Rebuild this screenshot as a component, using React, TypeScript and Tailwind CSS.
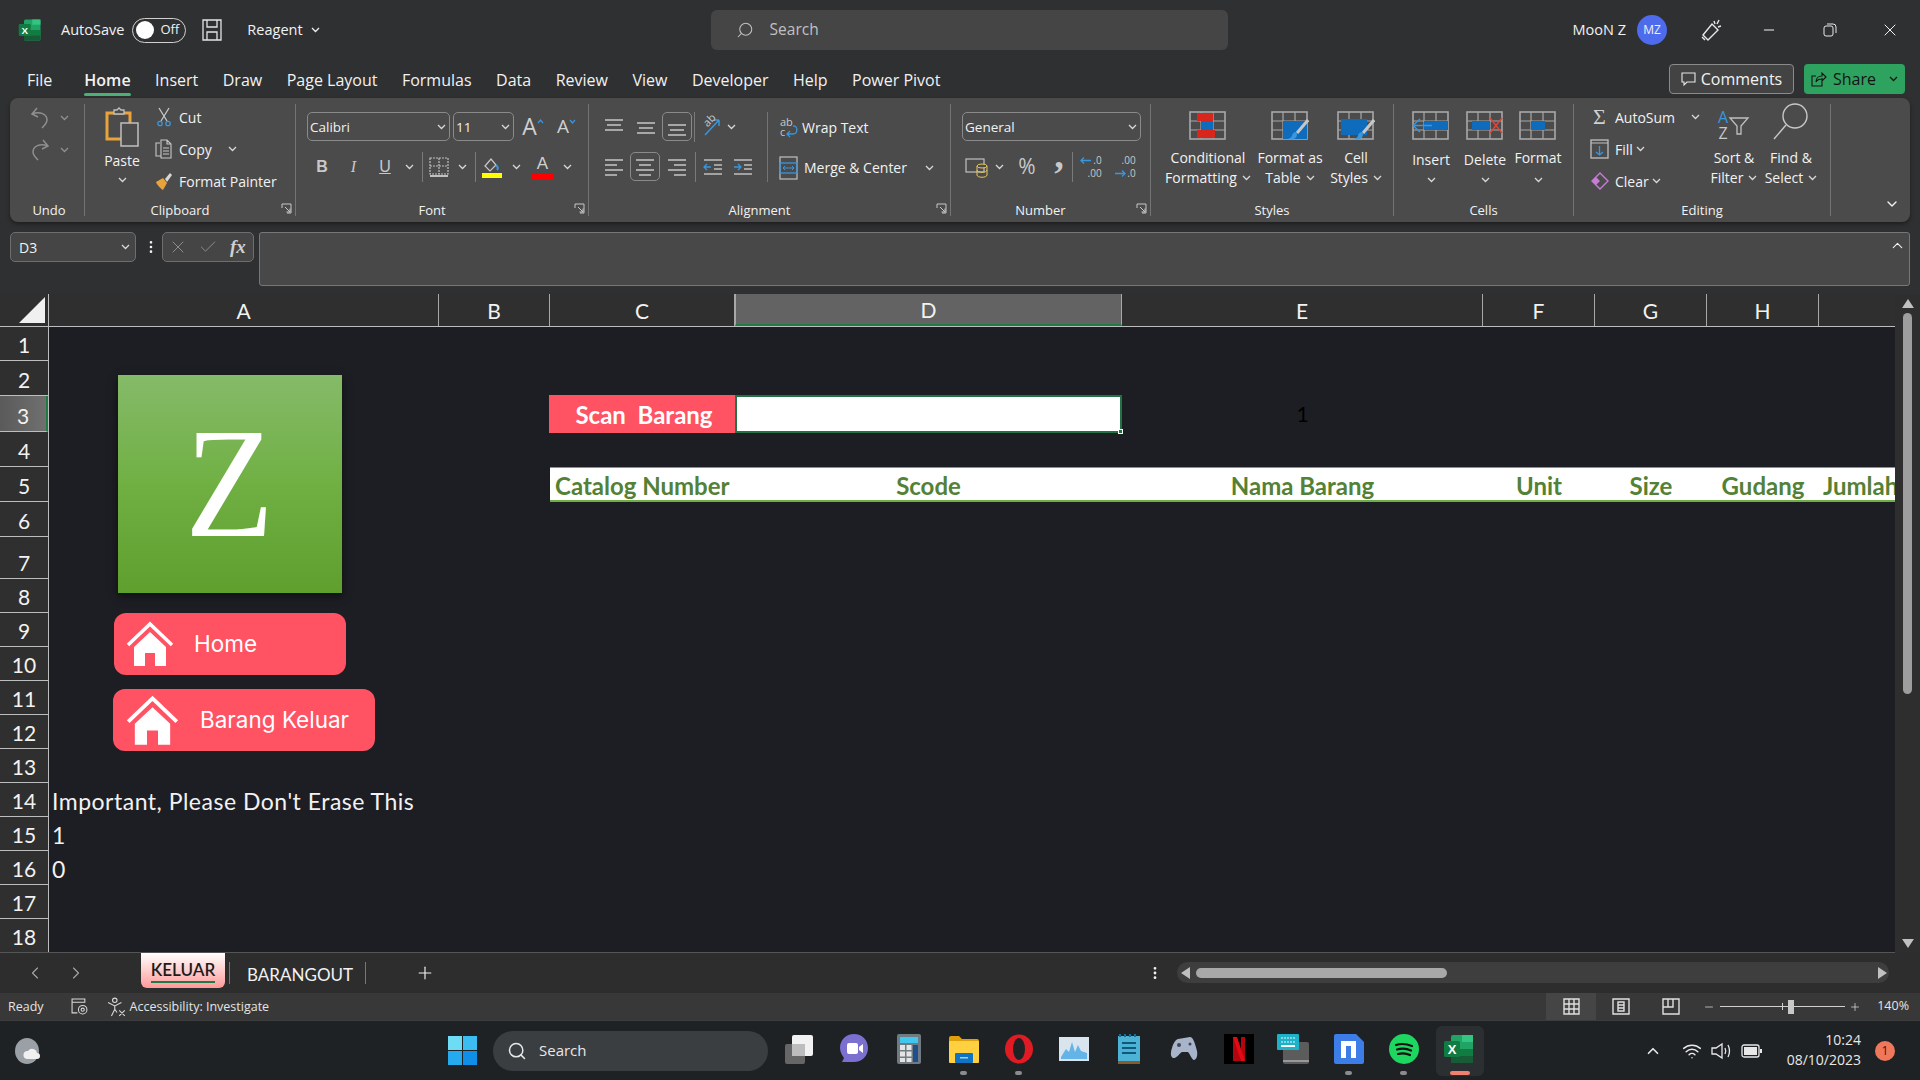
import type { ReactNode } from "react";
import { ChevronDown, ChevronLeft, ChevronRight, ChevronUp, Minus, Plus, Search, X, Check, Wifi, MoreVertical } from "lucide-react";

const G = "#c6c6c6";
const BL = "#3a96dd";

const Chev = ({ c = "#d8d8d8" }: { c?: string }) => (
  <svg width="9" height="6" viewBox="0 0 9 6" className="shrink-0"><path d="M1 1l3.500 3.500L8 1" fill="none" stroke={c} strokeWidth="1.300" /></svg>
);

const Svg = ({ w, h, children }: { w: number; h: number; children: ReactNode }) => (
  <svg width={w} height={h} viewBox={`0 0 ${w} ${h}`} className="shrink-0">{children}</svg>
);

// alignment icons: [y, x1, x2]
const Lines = ({ ys }: { ys: [number, number, number][] }) => (
  <Svg w={20} h={20}>
    {ys.map(([y, a, b]) => <path key={y} d={`M${a} ${y}H${b}`} stroke={G} strokeWidth="1.500" />)}
  </Svg>
);

// table-ish office icon used by the Styles and Cells groups
const TableIcon = ({ children }: { children?: ReactNode }) => (
  <Svg w={38} h={30}>
    <rect x="1" y="2" width="35" height="27" fill="none" stroke="#a8a8a8" strokeWidth="1.600" />
    <path d="M1 11h35M1 20h35M12 2v27M24 2v27" stroke="#a8a8a8" strokeWidth="1.200" />
    {children}
  </Svg>
);

const Brush = () => (
  <g>
    <path d="M37 10L26 23" stroke="#c6c6c6" strokeWidth="3" />
    <path d="M25 22c-3 0-4 3-4 4-1 2-3 2-4 3 4 1 9 0 9-5z" fill="#3a96dd" />
  </g>
);

const Big = ({ w, icon, lines, chev = true, mt = "mt-[8px]" }: { w: string; icon: ReactNode; lines: string[]; chev?: boolean; mt?: string }) => (
  <div className={`flex shrink-0 flex-col items-center ${w}`}>
    <div className="mt-[6px] flex h-[30px] items-center justify-center">{icon}</div>
    <div className={`${mt} flex flex-col items-center text-[14px] leading-[20px]`}>
      {lines.map((l, i) => (
        <span key={l} className="flex items-center gap-[5px] whitespace-nowrap">
          {l}
          {chev && i === lines.length - 1 && <Chev />}
        </span>
      ))}
    </div>
  </div>
);

const Group = ({ w, label, launcher, lab = "", children }: { w: string; label?: string; launcher?: boolean; lab?: string; children?: ReactNode }) => (
  <div className={`relative flex h-full shrink-0 flex-col border-r border-[#747474] ${w}`}>
    <div className="flex-1">{children}</div>
    <div className={`h-[16px] pt-[3px] text-center text-[13px] leading-[14px] ${launcher ? "pr-[20px]" : ""} ${lab}`}>{label}</div>
    {launcher && (
      <svg width="11" height="11" viewBox="0 0 11 11" className="absolute bottom-[2px] right-[3px]">
        <path d="M1 5V1h9v9H6M4 4l5 5M9 5.500V9H5.500" fill="none" stroke="#c8c8c8" strokeWidth="1" />
      </svg>
    )}
  </div>
);

const Row = ({ icon, text, chev, gap = "gap-[3px]" }: { icon: ReactNode; text: string; chev?: ReactNode; gap?: string }) => (
  <div className={`flex h-[28px] items-center ${gap} text-[14px]`}>
    {icon}
    <span className="whitespace-nowrap">{text}</span>
    {chev}
  </div>
);

const Slot = ({ w, children }: { w: string; children: ReactNode }) => (
  <span className={`flex shrink-0 items-center justify-center ${w}`}>{children}</span>
);

const Sep = ({ cls = "mx-[2px]" }: { cls?: string }) => <span className={`h-[30px] w-px shrink-0 bg-[#7a7a7a] ${cls}`} />;

const Dropdown = ({ w, text }: { w: string; text: string }) => (
  <div className={`flex h-[29px] shrink-0 items-center justify-between rounded-[5px] border border-[#8a8a8a] pl-[2px] pr-[3px] text-[13.500px] ${w}`}>
    <span className="pt-[1px]">{text}</span>
    <Chev />
  </div>
);

const Decimal = ({ top, bottom, arrow, arrowTop }: { top: string; bottom: string; arrow: string; arrowTop: boolean }) => (
  <span className="flex flex-col items-end gap-[1px] text-[10px] leading-[12px]">
    <span className="flex items-center gap-[1px]">
      {arrowTop && <svg width="12" height="9" viewBox="0 0 12 9" fill="none"><path d={arrow} stroke={BL} strokeWidth="1.300" /></svg>}
      {top}
    </span>
    <span className="flex items-center gap-[1px]">
      {!arrowTop && <svg width="12" height="9" viewBox="0 0 12 9" fill="none"><path d={arrow} stroke={BL} strokeWidth="1.300" /></svg>}
      {bottom}
    </span>
  </span>
);

const HouseIcon = ({ w }: { w: number }) => (
  <svg width={w} height={w} viewBox="0 0 48 46" className="shrink-0">
    <path d="M2 24L24 3l22 21" fill="none" stroke="#fff" strokeWidth="3.500" />
    <path d="M8 26L24 11l16 15v19H29V32h-10v13H8z" fill="#fff" />
  </svg>
);

const colHeaders: [string, string, boolean][] = [
  ["A", "w-[390px]", false],
  ["B", "w-[111px]", false],
  ["C", "w-[185px]", false],
  ["D", "w-[387px]", true],
  ["E", "w-[361px]", false],
  ["F", "w-[112px]", false],
  ["G", "w-[112px]", false],
  ["H", "w-[112px]", false],
];

const rowHeights = ["h-[34px]", "h-[35px]", "h-[36px]", "h-[35px]", "h-[35px]", "h-[35px]", "h-[42px]", "h-[34px]", "h-[34px]", "h-[34px]", "h-[34px]", "h-[34px]", "h-[34px]", "h-[34px]", "h-[34px]", "h-[34px]", "h-[34px]", "h-[34px]"];

const menu = ["Home", "Insert", "Draw", "Page Layout", "Formulas", "Data", "Review", "View", "Developer", "Help", "Power Pivot"];

const Tile = ({ children, dot, active }: { children: ReactNode; dot?: boolean; active?: boolean }) => (
  <div className="relative flex h-[50px] w-[55px] shrink-0 items-center justify-center">
    {active && <div className="absolute inset-y-0 left-[5px] w-[48px] rounded-md bg-[#2c2f31]" />}
    <div className="relative -mt-[3px] flex">{children}</div>
    {dot && <div className="absolute bottom-[1px] left-[24px] h-[4px] w-[7px] rounded-full bg-[#8c8c8c]" />}
    {active && <div className="absolute bottom-[1px] left-[19px] h-[4px] w-[20px] rounded-full bg-[#f08070]" />}
  </div>
);

const ExcelLogo = ({ s }: { s: number }) => (
  <svg width={s} height={s} viewBox="0 0 32 32" className="shrink-0">
    <rect x="8" y="2" width="22" height="28" rx="2" fill="#21a366" />
    <rect x="19" y="2" width="11" height="7" fill="#33c481" />
    <rect x="8" y="16" width="22" height="7" fill="#107c41" />
    <rect x="8" y="23" width="22" height="7" fill="#185c37" />
    <rect x="1" y="8" width="16" height="16" rx="1.500" fill="#107c41" />
    <text x="9" y="21" textAnchor="middle" fontSize="13" fontWeight="700" fill="#fff" fontFamily="Liberation Sans">X</text>
  </svg>
);

export default function App() {
  return (
    <div className="flex h-[1080px] w-[1920px] flex-col overflow-hidden bg-[#2f3031] font-['Open_Sans',sans-serif] text-[#f2f2f2]">
      {/* title bar */}
      <div className="flex h-[60px] shrink-0 items-center pl-[18px] text-[14.500px]">
        <ExcelLogo s={24} />
        <span className="ml-[19px]">AutoSave</span>
        <div className="ml-[8px] flex h-[25px] w-[54px] items-center justify-between rounded-full border border-[#d0d0d0] pl-[3px] pr-[6px] text-[13px]">
          <span className="h-[18px] w-[18px] rounded-full bg-white" />
          Off
        </div>
        <span className="ml-[16px] flex">
          <svg width="20" height="22" viewBox="0 0 20 22"><path d="M1 1h18v20H1zM5 1v7h10V1M5 21v-8h10v8" fill="none" stroke="#e4e4e4" strokeWidth="1.300" /></svg>
        </span>
        <span className="ml-[25px]">Reagent</span>
        <span className="ml-[8px]"><Chev c="#f0f0f0" /></span>
        <div className="ml-[391px] flex h-[40px] w-[517px] items-center gap-[16px] rounded-md bg-[#454545] pl-[25px] text-[#c0c0c0]">
          <Search size={18} className="-scale-x-100" strokeWidth={1.400} />
          <span className="-mt-[1px] text-[15.500px]">Search</span>
        </div>
        <span className="ml-auto">MooN Z</span>
        <span className="ml-[11px] flex h-[30px] w-[30px] items-center justify-center rounded-full bg-[#4f6bed] text-[12px]">MZ</span>
        <svg width="24" height="24" viewBox="0 0 24 24" className="ml-[32px]" fill="none" stroke="#e8e8e8" strokeWidth="1.400"><path d="M9 22l-5-5L13 6l6 6zM3 19l3 3M15 3l1 3M20 2l-2 4M22 8l-3 1" /></svg>
        <Minus size={16} className="ml-[38px]" strokeWidth={1.500} />
        <svg width="14" height="14" viewBox="0 0 14 14" fill="none" stroke="#e8e8e8" className="ml-[46px]"><rect x="1" y="3" width="9" height="10" rx="2" /><path d="M4 1h6a3 3 0 0 1 3 3v6" /></svg>
        <X size={20} className="ml-[43px] mr-[20px]" strokeWidth={1.200} />
      </div>

      {/* menu row */}
      <div className="flex h-[38px] shrink-0 items-start pl-[27px] pr-[15px] text-[16px]">
        <div className="h-[38px] pt-[8px] leading-[24px]">File</div>
        <div className="ml-[32px] flex gap-[24.500px]">
          {menu.map((m) => (
            <div key={m} className={`relative h-[38px] whitespace-nowrap pt-[8px] leading-[24px] ${m === "Home" ? "font-semibold" : ""}`}>
              {m}
              {m === "Home" && <div className="absolute inset-x-0 bottom-[2px] h-[3px] rounded-sm bg-[#4caf78]" />}
            </div>
          ))}
        </div>
        <div className="ml-auto mt-[4px] flex h-[30px] w-[125px] items-center justify-center gap-[5px] rounded-[4px] border border-[#8a8a8a] bg-[#434343]">
          <svg width="15" height="15" viewBox="0 0 15 15" fill="none" stroke="#e8e8e8" strokeWidth="1.100"><path d="M1 1h13v9H6l-3 3v-3H1z" /></svg>
          Comments
        </div>
        <div className="ml-[10px] mt-[4px] flex h-[30px] w-[101px] items-center justify-center gap-[6px] rounded-[4px] bg-[#2ea25f] text-[#141414]">
          <svg width="16" height="16" viewBox="0 0 16 16" fill="none" stroke="#141414" strokeWidth="1.100"><path d="M11 7v8H1V5h4M5 11c0-4 3-6 6-6V2l4 4-4 4V8c-3 0-5 1-6 3z" /></svg>
          Share
          <span className="ml-[7px]"><Chev c="#141414" /></span>
        </div>
      </div>

      {/* ribbon */}
      <div className="mx-[10px] flex h-[124px] shrink-0 rounded-lg bg-[#4b4b4b] py-[6px] shadow-[0_2px_4px_rgba(0,0,0,0.4)]">
        <Group w="w-[75px]" label="Undo" lab="pl-[4px]">
          <div className="flex flex-col gap-[4px] pl-[19px]">
            <div className="flex h-[28px] items-center gap-[9px]">
              <svg width="22" height="24" viewBox="0 0 22 24" fill="none" stroke="#8f8f8f" strokeWidth="1.500"><path d="M8 2L3 8l6 3M3 8c8-3 15 0 15 6 0 3-2 5-5 8" /></svg>
              <Chev c="#8f8f8f" />
            </div>
            <div className="flex h-[28px] items-center gap-[9px]">
              <svg width="22" height="24" viewBox="0 0 22 24" fill="none" stroke="#8f8f8f" strokeWidth="1.500"><path d="M14 2l5 6-6 3M19 8C11 5 4 8 4 14c0 3 2 5 5 8" /></svg>
              <Chev c="#8f8f8f" />
            </div>
          </div>
        </Group>

        <Group w="w-[211px]" label="Clipboard" launcher>
          <div className="flex">
            <div className="flex w-[74px] shrink-0 flex-col items-center">
              <svg width="36" height="40" viewBox="0 0 36 40" className="mt-[3px]" fill="none"><path d="M3 6h23v26H3z" stroke="#e8a33d" strokeWidth="3" /><path d="M10 7V3h3l2-2 2 2h3v4z" fill="#4b4b4b" stroke="#c0c0c0" strokeWidth="1.300" /><rect x="17" y="16" width="17" height="23" fill="#4b4b4b" stroke="#c0c0c0" strokeWidth="1.500" /></svg>
              <span className="mt-[4px] text-[14px] leading-[20px]">Paste</span>
              <span className="mt-[6px]"><Chev /></span>
            </div>
            <div className="-ml-[7px] -mt-[1px] flex flex-col gap-[4px]">
              <Row icon={<span className="flex w-[24px] justify-center"><svg width="14" height="20" viewBox="0 0 14 20" fill="none"><path d="M2 1l8 13M12 1L4 14" stroke="#c8c8c8" strokeWidth="1.300" /><circle cx="3" cy="16.500" r="2.200" stroke={BL} strokeWidth="1.300" /><circle cx="11" cy="16.500" r="2.200" stroke={BL} strokeWidth="1.300" /></svg></span>} text="Cut" />
              <Row icon={<span className="flex w-[24px] justify-center"><svg width="20" height="20" viewBox="0 0 20 20" fill="none" stroke="#c8c8c8" strokeWidth="1.100"><path d="M6 4H2v13h5M7 1h6l4 4v14H7zM13 1v4h4M9 9h6M9 12h6M9 15h6" /></svg></span>} text="Copy" chev={<span className="ml-[13px]"><Chev /></span>} />
              <Row icon={<span className="flex w-[24px] justify-center"><svg width="20" height="20" viewBox="0 0 20 20"><path d="M2 11l7-4 4 5-4 7c-2-1-6-5-7-8z" fill="#e8a33d" /><path d="M11 8l5-6 2 2-5 7z" fill="#d8d8d8" /></svg></span>} text="Format Painter" />
            </div>
          </div>
        </Group>

        <Group w="w-[293px]" label="Font" launcher>
          <div className="flex flex-col gap-[11px] pl-[11px] pt-[8px]">
            <div className="flex items-center gap-[3px]">
              <Dropdown w="w-[143px]" text="Calibri" />
              <Dropdown w="w-[61px]" text="11" />
              <Slot w="w-[32px]"><span className="flex items-start text-[23px] leading-none text-[#d0d0d0]">A<svg width="7" height="5" viewBox="0 0 7 5" className="mt-[4px]"><path d="M1 4l2.500-3L6 4" fill="none" stroke={BL} strokeWidth="1.200" /></svg></span></Slot>
              <Slot w="w-[29px]"><span className="flex items-start text-[19px] leading-none text-[#d0d0d0]">A<svg width="7" height="5" viewBox="0 0 7 5" className="mt-[2px]"><path d="M1 1l2.500 3L6 1" fill="none" stroke={BL} strokeWidth="1.200" /></svg></span></Slot>
            </div>
            <div className="-ml-[1px] flex h-[29px] items-center font-['Liberation_Sans',sans-serif] text-[16px] text-[#c8c8c8]">
              <Slot w="w-[32px]"><b>B</b></Slot>
              <Slot w="w-[31px]"><i className="font-['Liberation_Serif',serif]">I</i></Slot>
              <Slot w="w-[32px]"><u>U</u></Slot>
              <Slot w="w-[16px]"><Chev /></Slot>
              <Sep cls="ml-[5px] mr-[1px]" />
              <Slot w="w-[30px]"><svg width="20" height="20" viewBox="0 0 20 20" fill="none" stroke="#c0c0c0" strokeWidth="1.200"><path strokeDasharray="2 1" d="M1 1h18v16H1zM10 1v16M1 9h18" /><path d="M1 19h18" strokeWidth="2" /></svg></Slot>
              <Slot w="w-[17px]"><Chev /></Slot>
              <Sep cls="ml-[4px] mr-[1px]" />
              <Slot w="w-[30px]"><svg width="22" height="22" viewBox="0 0 22 22" fill="none"><path d="M4 10l6-7 5 6-6 6z" stroke="#c8c8c8" strokeWidth="1.200" /><path d="M15 9c2 2 2 4 1 5" stroke={BL} strokeWidth="2" /><rect x="1" y="17" width="20" height="5" fill="#ffff00" /></svg></Slot>
              <Slot w="w-[19px]"><Chev /></Slot>
              <Slot w="w-[33px]"><span className="relative flex h-[24px] w-[21px] justify-center text-[17px] font-normal leading-[17px] text-[#d0d0d0]">A<span className="absolute bottom-0 left-0 h-[5px] w-full bg-[#ff0000]" /></span></Slot>
              <Slot w="w-[16px]"><Chev /></Slot>
            </div>
          </div>
        </Group>

        <Group w="w-[362px]" label="Alignment" launcher>
          <div className="flex pt-[8px]">
            <div className="flex w-[179px] shrink-0 flex-col gap-[11px] border-r border-[#747474] pl-[9px]">
              <div className="flex h-[29px] items-center">
                <Slot w="w-[32px]"><Lines ys={[[3, 1, 19], [8, 3, 17], [13, 1, 19]]} /></Slot>
                <Slot w="w-[32px]"><Lines ys={[[6, 1, 19], [11, 3, 17], [16, 1, 19]]} /></Slot>
                <span className="flex h-[29px] w-[30px] items-center justify-center rounded-[5px] border border-[#8a8a8a]"><Lines ys={[[8, 1, 19], [13, 3, 17], [18, 1, 19]]} /></span>
                <Sep />
                <Slot w="w-[28px]"><svg width="24" height="22" viewBox="0 0 24 22" fill="none" className="overflow-visible"><path d="M6 19L20 4M20 4h-6M20 4v6" stroke={BL} strokeWidth="1.500" /><text x="7" y="12" fontSize="11" fill="#c8c8c8" fontFamily="Open Sans" transform="rotate(-45 7 10)">ab</text></svg></Slot>
                <Slot w="w-[12px]"><Chev /></Slot>
              </div>
              <div className="flex h-[29px] items-center">
                <Slot w="w-[32px]"><Lines ys={[[3, 1, 19], [8, 1, 13], [13, 1, 19], [18, 1, 13]]} /></Slot>
                <span className="flex h-[29px] w-[30px] items-center justify-center rounded-[5px] border border-[#8a8a8a]"><Lines ys={[[3, 1, 19], [8, 4, 16], [13, 1, 19], [18, 4, 16]]} /></span>
                <Slot w="w-[33px]"><Lines ys={[[3, 1, 19], [8, 7, 19], [13, 1, 19], [18, 7, 19]]} /></Slot>
                <Sep />
                <Slot w="w-[30px]"><svg width="20" height="18" viewBox="0 0 20 18" fill="none"><path d="M1 2h18M11 7h8M11 11h8M1 16h18" stroke="#c0c0c0" strokeWidth="1.300" /><path d="M8 9H1M4 6L1 9l3 3" stroke={BL} strokeWidth="1.300" /></svg></Slot>
                <Slot w="w-[30px]"><svg width="20" height="18" viewBox="0 0 20 18" fill="none"><path d="M1 2h18M11 7h8M11 11h8M1 16h18" stroke="#c0c0c0" strokeWidth="1.300" /><path d="M1 9h7M5 6l3 3-3 3" stroke={BL} strokeWidth="1.300" /></svg></Slot>
              </div>
            </div>
            <div className="flex flex-col gap-[11px] pl-[11px] pt-[1px]">
              <div className="flex h-[29px] items-center gap-[3px] text-[14px]">
                <svg width="20" height="24" viewBox="0 0 20 24" fill="none" className="overflow-visible"><path d="M14 10h1c4 0 4 8-1 8H8M11 15l-3 3 3 3" stroke={BL} strokeWidth="1.300" /><text x="1" y="10" fontSize="11" fill="#c8c8c8" fontFamily="Open Sans">ab</text><text x="1" y="20" fontSize="11" fill="#c8c8c8" fontFamily="Open Sans">c</text></svg>
                Wrap Text
              </div>
              <div className="flex h-[29px] items-center gap-[6px] text-[14px]">
                <svg width="19" height="24" viewBox="0 0 19 24" fill="none"><rect x="1" y="1" width="17" height="22" stroke="#c0c0c0" strokeWidth="1.200" /><rect x="1" y="7" width="17" height="10" stroke={BL} strokeWidth="1.300" /><path d="M4 12h11M6 10l-2 2 2 2M13 10l2 2-2 2" stroke={BL} strokeWidth="1" /></svg>
                Merge &amp; Center
                <span className="ml-[12px]"><Chev /></span>
              </div>
            </div>
          </div>
        </Group>

        <Group w="w-[200px]" label="Number" launcher>
          <div className="flex flex-col gap-[11px] pl-[11px] pt-[8px]">
            <Dropdown w="w-[179px]" text="General" />
            <div className="flex h-[29px] items-center text-[#c8c8c8]">
              <Slot w="w-[30px]"><svg width="24" height="24" viewBox="0 0 24 24" fill="none"><rect x="1" y="4" width="18" height="13" stroke="#c0c0c0" strokeWidth="1.200" /><ellipse cx="17" cy="11" rx="5" ry="2" fill="#4b4b4b" stroke="#e8c65a" /><path d="M12 11v9c0 3 10 3 10 0v-9M12 15c0 3 10 3 10 0" stroke="#e8c65a" /></svg></Slot>
              <Slot w="w-[14px]"><Chev /></Slot>
              <Slot w="w-[42px]"><span className="text-[21px]">%</span></Slot>
              <Slot w="w-[22px]"><span className="-mt-[24px] font-['Liberation_Serif',serif] text-[38px] font-bold leading-[30px]">,</span></Slot>
              <Sep />
              <Slot w="w-[32px]"><Decimal top=".0" bottom=".00" arrow="M11 4.500H1M4 1.500L1 4.500l3 3" arrowTop /></Slot>
              <Slot w="w-[36px]"><Decimal top=".00" bottom=".0" arrow="M1 4.500h10M8 1.500l3 3-3 3" arrowTop={false} /></Slot>
            </div>
          </div>
        </Group>

        <Group w="w-[243px]" label="Styles">
          <div className="flex pl-[13px]">
            <Big w="w-[88px]" lines={["Conditional", "Formatting"]} icon={<TableIcon><rect x="8" y="3" width="16" height="8" fill="#d8261c" /><rect x="12" y="11" width="12" height="9" fill="#0f6cbd" /><rect x="8" y="20" width="18" height="8" fill="#d8261c" /></TableIcon>} />
            <Big w="w-[76px]" lines={["Format as", "Table"]} icon={<TableIcon><rect x="12" y="11" width="24" height="18" fill="#0f6cbd" /><Brush /></TableIcon>} />
            <Big w="w-[56px]" lines={["Cell", "Styles"]} icon={<TableIcon><rect x="4" y="9" width="26" height="16" fill="#0f6cbd" /><Brush /></TableIcon>} />
          </div>
        </Group>

        <Group w="w-[180px]" label="Cells">
          <div className="flex pl-[9px]">
            <Big w="w-[56px]" lines={["Insert"]} chev={false} mt="mt-[10px]" icon={<TableIcon><rect x="12" y="11" width="24" height="9" fill="#0f6cbd" /><path d="M20 15.500H1M8 9l-7 6.500L8 22" fill="none" stroke={BL} strokeWidth="1.500" /></TableIcon>} />
            <Big w="w-[52px]" lines={["Delete"]} chev={false} mt="mt-[10px]" icon={<TableIcon><rect x="6" y="11" width="18" height="9" fill="#0f6cbd" /><path d="M24 8l12 15M36 8L24 23" stroke="#e0443a" strokeWidth="1.500" /></TableIcon>} />
            <Big w="w-[54px]" lines={["Format"]} chev={false} icon={<TableIcon><rect x="12" y="11" width="14" height="9" fill="#0f6cbd" /></TableIcon>} />
          </div>
          <div className="mt-[7px] flex pl-[9px]">
            <Slot w="w-[56px]"><Chev /></Slot>
            <Slot w="w-[52px]"><Chev /></Slot>
            <Slot w="w-[54px]"><Chev /></Slot>
          </div>
        </Group>

        <Group w="w-[257px]" label="Editing">
          <div className="flex">
            <div className="-mt-[1px] flex w-[132px] shrink-0 flex-col gap-[4px] pl-[16px]">
              <Row gap="gap-[6px]" icon={<span className="w-[19px] text-center font-['Liberation_Serif',serif] text-[22px] leading-[22px] text-[#d0d0d0]">Σ</span>} text="AutoSum" chev={<span className="ml-[10px]"><Chev /></span>} />
              <Row gap="gap-[6px]" icon={<svg width="19" height="20" viewBox="0 0 19 20" fill="none"><rect x="1" y="1" width="17" height="18" stroke="#c0c0c0" strokeWidth="1.300" /><path d="M1 4h17" stroke="#c0c0c0" /><path d="M9.500 7v9M6 13l3.500 3 3.500-3" stroke={BL} strokeWidth="1.300" /></svg>} text="Fill" chev={<span className="-ml-[3px]"><Chev /></span>} />
              <Row gap="gap-[6px]" icon={<svg width="19" height="20" viewBox="0 0 19 20" fill="none"><path d="M10 2l8 8-8 8-8-8z" stroke="#c77dd6" strokeWidth="1.400" /><path d="M6 14l-4-4 4-4 4 4z" fill="#c77dd6" /></svg>} text="Clear" chev={<span className="-ml-[3px]"><Chev /></span>} />
            </div>
            <Big w="w-[56px]" lines={["Sort &", "Filter"]} icon={<div className="flex items-center"><span className="flex flex-col text-center text-[16px] leading-[16px]"><span className="text-[#3a96dd]">A</span><span className="text-[#c8c8c8]">Z</span></span><svg width="22" height="26" viewBox="0 0 22 26" fill="none"><path d="M2 6h18l-7 8v8H9v-8z" stroke="#c0c0c0" strokeWidth="1.300" /></svg></div>} />
            <Big w="w-[58px]" lines={["Find &", "Select"]} icon={<svg width="38" height="42" viewBox="0 0 38 42" fill="none" className="-mt-[6px]"><circle cx="23" cy="15" r="12" stroke="#c8c8c8" strokeWidth="1.400" /><path d="M14 24L2 38" stroke="#c8c8c8" strokeWidth="1.400" /></svg>} />
          </div>
        </Group>

        <div className="flex flex-1 items-end justify-end pb-[4px] pr-[10px]">
          <ChevronDown size={16} strokeWidth={2} />
        </div>
      </div>

      {/* formula bar */}
      <div className="mt-[10px] flex h-[54px] shrink-0 items-start px-[10px]">
        <div className="flex h-[30px] w-[126px] items-center justify-between rounded-[5px] border border-[#6e6e6e] bg-[#454545] pl-[8px] pr-[5px] text-[14px]">
          D3
          <Chev />
        </div>
        <MoreVertical size={16} className="ml-[7px] mt-[7px]" strokeWidth={2} />
        <div className="ml-[3px] flex h-[30px] w-[92px] items-center gap-[10px] rounded-[5px] border border-[#6e6e6e] bg-[#454545] pl-[5px] text-[#8c8c8c]">
          <X size={20} strokeWidth={1.200} />
          <Check size={20} strokeWidth={1.200} />
          <i className="ml-[2px] font-['Liberation_Serif',serif] text-[19px] font-bold text-[#d0d0d0]">fx</i>
        </div>
        <div className="ml-[5px] flex h-[54px] flex-1 justify-end rounded-[3px] border border-[#777] bg-[#484848] pr-[3px] pt-[4px]">
          <ChevronUp size={17} strokeWidth={1.500} />
        </div>
      </div>

      {/* sheet */}
      <div className="mt-[8px] flex min-h-0 w-full flex-1">
        <div className="flex min-w-0 flex-1 flex-col overflow-hidden border-b border-[#555] bg-[#1d1e23] font-['Lato',sans-serif] text-[21px]">
          <div className="flex h-[33px] shrink-0 border-b border-[#bdbdbd] bg-[#2f2f2f]">
            <div className="relative h-full w-[49px] shrink-0 border-r border-[#bdbdbd]">
              <svg width="28" height="28" viewBox="0 0 28 28" className="absolute bottom-[2px] right-[2px]"><path d="M27 1v26H1z" fill="#f0f0f0" /></svg>
            </div>
            {colHeaders.map(([n, w, sel]) => (
              <div key={n} className={`flex h-full shrink-0 items-center justify-center border-r border-[#a8a8a8] pt-[2px] ${w} ${sel ? "border-b-2 border-l border-b-[#1f7a45] bg-[#636363]" : ""}`}>{n}</div>
            ))}
          </div>
          <div className="flex min-h-0 flex-1">
            <div className="w-[49px] shrink-0 border-r border-[#bdbdbd] bg-[#2f2f2f]">
              {rowHeights.map((h, i) => (
                <div key={i} className={`flex shrink-0 items-end justify-center border-b border-[#bdbdbd] ${h} ${i === 2 ? "border-r-2 border-r-[#1f7a45] bg-gradient-to-r from-[#5a5a5a] to-[#707070]" : ""}`}>{i + 1}</div>
              ))}
            </div>
            <div className="relative min-w-0 flex-1 overflow-hidden">
              <div className="grid grid-cols-[390px_111px_185px_387px_361px_112px_112px_112px_90px] grid-rows-[34px_35px_36px_35px_35px_35px_42px_repeat(11,34px)]">
                <div className="col-start-3 row-start-3 -my-px -ml-px flex items-center justify-center bg-[#ff5263] pl-[4px] pt-[2px] text-[24px] font-bold text-white">Scan&nbsp; Barang</div>
                <div className="relative col-start-4 row-start-3 -my-px border-2 border-[#217346] bg-white">
                  <span className="absolute -bottom-[3px] -right-[3px] h-[5px] w-[5px] border border-white bg-[#217346]" />
                </div>
                <div className="col-start-5 row-start-3 flex items-center justify-center text-black">1</div>

                <div className="col-start-3 col-end-10 row-start-5 grid grid-cols-[185px_387px_361px_112px_112px_112px_90px] items-center border-t border-b-2 border-[#70ad47] bg-white text-[24px] font-bold text-[#538135]">
                  <span className="whitespace-nowrap pl-[5px]">Catalog Number</span>
                  <span className="text-center">Scode</span>
                  <span className="text-center">Nama Barang</span>
                  <span className="text-center">Unit</span>
                  <span className="text-center">Size</span>
                  <span className="text-center">Gudang</span>
                  <span className="whitespace-nowrap pl-[4px] text-left">Jumlah</span>
                </div>

                <div className="col-start-1 row-start-14 flex items-center whitespace-nowrap pl-[3px] pt-[2px] text-[23px] tracking-[0.5px]">Important, Please Don't Erase This</div>
                <div className="col-start-1 row-start-15 flex items-center pl-[3px] pt-[2px] text-[23px]">1</div>
                <div className="col-start-1 row-start-16 flex items-center pl-[3px] pt-[2px] text-[23px]">0</div>
              </div>

              {/* shapes floating over the cells */}
              <div className="absolute left-[69px] top-[48px] flex h-[218px] w-[224px] items-center justify-center bg-gradient-to-b from-[#85ba68] via-[#70b043] to-[#5f9f2e] shadow-[0_3px_8px_rgba(0,0,0,0.5)]">
                <span className="scale-x-[0.93] font-['Liberation_Serif',serif] text-[156px] leading-none text-white">Z</span>
              </div>
              <div className="absolute left-[65px] top-[286px] flex h-[62px] w-[232px] items-center rounded-[12px] bg-[#ff5263] pl-[12px] text-white">
                <HouseIcon w={48} />
                <span className="ml-[20px] font-['Inter',sans-serif] text-[22.500px]">Home</span>
              </div>
              <div className="absolute left-[64px] top-[362px] flex h-[62px] w-[262px] items-center rounded-[12px] bg-[#ff5263] pl-[13px] text-white">
                <HouseIcon w={53} />
                <span className="-mt-[1px] ml-[21px] whitespace-nowrap font-['Inter',sans-serif] text-[22.500px]">Barang Keluar</span>
              </div>
            </div>
          </div>
        </div>
        <div className="flex w-[25px] shrink-0 flex-col items-center justify-between bg-[#2e2e2e] py-[5px]">
          <svg width="12" height="9" viewBox="0 0 12 9"><path d="M6 0l6 9H0z" fill="#c0c0c0" /></svg>
          <div className="mb-[245px] mt-[5px] h-[385px] w-[9px] rounded-full bg-[#9e9e9e]" />
          <svg width="12" height="9" viewBox="0 0 12 9"><path d="M6 9l6-9H0z" fill="#c0c0c0" /></svg>
        </div>
      </div>

      {/* sheet tabs */}
      <div className="flex h-[40px] shrink-0 items-start bg-[#2d2d2d] font-['Lato',sans-serif] text-[17px]">
        <ChevronLeft size={20} className="ml-[25px] mt-[10px] text-[#a8a8a8]" strokeWidth={1.300} />
        <ChevronRight size={20} className="ml-[21px] mt-[10px] text-[#a8a8a8]" strokeWidth={1.300} />
        <div className="ml-[55px] flex h-[35px] w-[84px] items-start justify-center rounded-b-md bg-gradient-to-b from-white to-[#ff9a9a] pt-[6px] font-semibold leading-[22px] text-[#1c1c1c]">
          <span className="border-b-2 border-[#1f7a45]">KELUAR</span>
        </div>
        <span className="ml-[4px] mt-[9px] h-[22px] w-px bg-[#777]" />
        <span className="ml-[17px] mt-[9px] w-[102px] whitespace-nowrap">BARANGOUT</span>
        <span className="ml-[16px] mt-[9px] h-[22px] w-px bg-[#777]" />
        <Plus size={20} className="ml-[49px] mt-[10px]" strokeWidth={1.400} />
        <MoreVertical size={16} className="ml-[712px] mt-[12px]" strokeWidth={2.200} />
        <div className="ml-[14px] mt-[9px] flex h-[21px] w-[712px] items-center rounded-full bg-[#3e3e3e] pl-[4px] pr-[2px]">
          <svg width="9" height="12" viewBox="0 0 9 12"><path d="M0 6l9-6v12z" fill="#c0c0c0" /></svg>
          <div className="ml-[6px] h-[10px] w-[251px] rounded-full bg-[#a8a8a8]" />
          <svg width="9" height="12" viewBox="0 0 9 12" className="ml-auto"><path d="M9 6L0 0v12z" fill="#c0c0c0" /></svg>
        </div>
      </div>

      {/* status bar */}
      <div className="flex h-[27px] shrink-0 items-center bg-[#383838] pl-[8px] pr-[11px] text-[12.500px] text-[#e4e4e4]">
        <span className="mt-[1px]">Ready</span>
        <svg width="17" height="17" viewBox="0 0 16 16" fill="none" stroke="#d8d8d8" className="ml-[27px]"><path d="M1 1h12v3H1zM1 4v10h5" /><circle cx="11" cy="11" r="4" /><circle cx="11" cy="11" r="1.500" /></svg>
        <svg width="20" height="20" viewBox="0 0 18 18" fill="none" stroke="#d8d8d8" className="ml-[19px]"><circle cx="7" cy="3" r="2" /><path d="M1 5l6 3 6-3M7 8v3l-3 6M7 11l2 3M11 12l5 5M16 12l-5 5" /></svg>
        <span className="ml-[3px] mt-[1px]">Accessibility: Investigate</span>
        <div className="ml-auto flex h-[27px] w-[50px] items-center justify-center bg-[#454545]">
          <svg width="17" height="17" viewBox="0 0 17 17" fill="none" stroke="#e0e0e0" strokeWidth="1.400"><path d="M1 1h15v15H1zM1 6h15M1 11h15M6 1v15M11 1v15" /></svg>
        </div>
        <span className="flex w-[50px] justify-center">
          <svg width="18" height="17" viewBox="0 0 18 17" fill="none" stroke="#e0e0e0" strokeWidth="1.400"><path d="M1 1h16v15H1zM6 4h6v9H6zM6 7h6M6 10h6" /></svg>
        </span>
        <span className="flex w-[50px] justify-center">
          <svg width="18" height="17" viewBox="0 0 18 17" fill="none" stroke="#e0e0e0" strokeWidth="1.400"><path d="M1 1h16v15H1zM1 9h10V1M6 1v8" /></svg>
        </span>
        <Minus size={12} className="ml-[7px]" strokeWidth={1.400} />
        <div className="relative ml-[5px] flex h-[14px] w-[125px] items-center">
          <div className="h-px w-full bg-[#d0d0d0]" />
          <span className="absolute left-[62px] h-[7px] w-px bg-[#d0d0d0]" />
          <span className="absolute left-[68px] h-[14px] w-[6px] bg-[#c8c8c8]" />
        </div>
        <Plus size={12} className="ml-[4px]" strokeWidth={1.400} />
        <span className="ml-[16px] w-[32px] text-right">140%</span>
      </div>

      {/* windows taskbar */}
      <div className="flex h-[60px] shrink-0 items-center border-t border-[#3d3d3d] bg-[#1f2224] text-[#e8e8e8]">
        <svg width="28" height="28" viewBox="0 0 28 28" className="ml-[15px] shrink-0"><ellipse cx="12" cy="14" rx="12" ry="13" fill="#9aa0a6" /><path d="M12 22a4 4 0 0 1 1-8 5 5 0 0 1 9 2 3 3 0 0 1 0 6z" fill="#f0f0f0" /></svg>
        <svg width="30" height="30" viewBox="0 0 30 30" className="ml-[405px] shrink-0">
          <rect x="0" y="0" width="14" height="14" fill="#6fdcf5" /><rect x="15" y="0" width="14" height="14" fill="#3cbdf2" />
          <rect x="0" y="15" width="14" height="14" fill="#25a9ef" /><rect x="15" y="15" width="14" height="14" fill="#0f8fe8" />
        </svg>
        <div className="ml-[15px] flex h-[40px] w-[275px] shrink-0 items-center gap-[12px] rounded-full bg-[#3a3e40] pl-[14px] text-[15px]">
          <Search size={20} strokeWidth={1.800} />
          Search
        </div>
        <div className="ml-[3px] flex">
          <Tile><svg width="30" height="30" viewBox="0 0 30 30"><rect x="1" y="10" width="20" height="20" rx="2" fill="#666" /><rect x="8" y="1" width="21" height="21" rx="2" fill="#f2f2f2" /><rect x="8" y="10" width="13" height="12" fill="#bdbdbd" /></svg></Tile>
          <Tile><svg width="30" height="32" viewBox="0 0 30 32"><path d="M15 1c8 0 14 6 14 14s-6 14-14 14H3l2-4C3 22 1 19 1 15 1 7 7 1 15 1z" fill="#7b6fd0" /><rect x="8" y="10" width="11" height="11" rx="2" fill="#fff" /><path d="M20 14l4-3v9l-4-3z" fill="#fff" /></svg></Tile>
          <Tile><svg width="24" height="30" viewBox="0 0 24 30"><rect width="24" height="30" rx="2" fill="#6f7a82" /><rect x="3" y="3" width="18" height="6" fill="#41c7ee" /><path d="M3 11h5v5H3zM9.500 11h5v5h-5zM3 17.500h5v5H3zM9.500 17.500h5v5h-5zM3 24h5v4H3zM9.500 24h5v4h-5z" fill="#e4e4e4" /><rect x="16" y="11" width="5" height="17" fill="#1f4e8c" /></svg></Tile>
          <Tile dot><svg width="30" height="28" viewBox="0 0 30 28"><path d="M0 3a2 2 0 0 1 2-2h8l3 3h15a2 2 0 0 1 2 2v6H0z" fill="#e0a00e" /><rect y="6" width="30" height="22" rx="1" fill="#ffd040" /><rect x="6" y="18" width="18" height="10" rx="1" fill="#0f74c4" /><rect x="11" y="22" width="8" height="1.500" fill="#9fd0f5" /></svg></Tile>
          <Tile dot><svg width="30" height="30" viewBox="0 0 30 30"><ellipse cx="15" cy="15" rx="14" ry="14.500" fill="#e01b24" /><ellipse cx="15" cy="15" rx="6" ry="11" fill="#1f2224" /></svg></Tile>
          <Tile><svg width="30" height="24" viewBox="0 0 30 24"><rect width="30" height="24" fill="#d8e4ee" /><path d="M2 20l5-8 3 3 3-10 3 10 3-7 3 6 6 2v6H2z" fill="#64b4e8" /></svg></Tile>
          <Tile><svg width="22" height="30" viewBox="0 0 22 30"><rect y="2" width="22" height="25" fill="#4db3d6" /><rect y="27" width="22" height="3" fill="#8a5a2b" /><path d="M2 0v3M7 0v3M12 0v3M17 0v3" stroke="#1d6f91" strokeWidth="2" /><path d="M4 9h14M4 14h14M4 19h14" stroke="#0d5a7d" strokeWidth="2" /></svg></Tile>
          <Tile><svg width="28" height="26" viewBox="0 0 28 26"><path d="M8 3l12-2c3 0 5 6 7 14 1 5-1 9-3 9s-4-6-6-8h-6c-2 1-6 7-9 6-2-1-3-4-1-10 1-4 3-8 6-9z" fill="#a7b4c9" /><circle cx="20" cy="8" r="1.500" fill="#445" /><circle cx="9" cy="9" r="2" fill="#445" /></svg></Tile>
          <Tile><div className="flex h-[30px] w-[30px] items-center justify-center bg-black"><svg width="12" height="24" viewBox="0 0 12 24"><path d="M0 0h4l4 24H0z" fill="#b1060f" /><path d="M8 0h4v24H8z" fill="#b1060f" /><path d="M0 0h4l8 24H8z" fill="#e50914" /></svg></div></Tile>
          <Tile><svg width="34" height="30" viewBox="0 0 34 30"><rect x="6" y="8" width="26" height="22" rx="2" fill="#5c5c5c" /><rect x="6" y="26" width="26" height="2" fill="#999" /><rect width="22" height="16" rx="1" fill="#1eb2c9" /><path d="M4 4h14M4 8h14" stroke="#e8fbff" strokeDasharray="2 1" /><path d="M4 12h14" stroke="#fff" strokeWidth="2" /></svg></Tile>
          <Tile dot><svg width="30" height="30" viewBox="0 0 30 30"><path d="M2 0h20l8 8v20a2 2 0 0 1-2 2H2a2 2 0 0 1-2-2V2a2 2 0 0 1 2-2z" fill="#3d7de8" /><path d="M7 24V7h15v17h-5V12h-5v12z" fill="#fff" /></svg></Tile>
          <Tile dot><svg width="30" height="30" viewBox="0 0 30 30"><circle cx="15" cy="15" r="15" fill="#1ed760" /><path d="M7 11c6-2 11-1 16 1M8 15.500c5-1.500 10-1 14 1M9 20c4-1 8-1 12 1" fill="none" stroke="#121212" strokeWidth="2.200" strokeLinecap="round" /></svg></Tile>
          <Tile active><ExcelLogo s={32} /></Tile>
        </div>
        <ChevronUp size={18} className="ml-[158px]" strokeWidth={2.200} />
        <Wifi size={20} className="ml-[20px]" strokeWidth={1.800} />
        <svg width="22" height="18" viewBox="0 0 22 18" fill="none" stroke="#e8e8e8" strokeWidth="1.300" className="ml-[9px]"><path d="M1 6h4l6-4v14l-6-4H1zM14 6c1 2 1 4 0 6M17 3c2 4 2 8 0 12" /></svg>
        <svg width="22" height="14" viewBox="0 0 22 14" className="ml-[8px]" fill="none"><rect x="1" y="1" width="17" height="12" rx="2" stroke="#e8e8e8" strokeWidth="1.300" /><rect x="3" y="3" width="13" height="8" fill="#e8e8e8" /><rect x="19" y="5" width="2" height="4" fill="#e8e8e8" /></svg>
        <div className="ml-auto -mt-[2px] flex flex-col items-end text-[14px] leading-[20px]">
          <span>10:24</span>
          <span>08/10/2023</span>
        </div>
        <span className="ml-[14px] mr-[25px] flex h-[20px] w-[20px] items-center justify-center rounded-full bg-[#f0785a] text-[12px] text-[#1f2224]">1</span>
      </div>
    </div>
  );
}
